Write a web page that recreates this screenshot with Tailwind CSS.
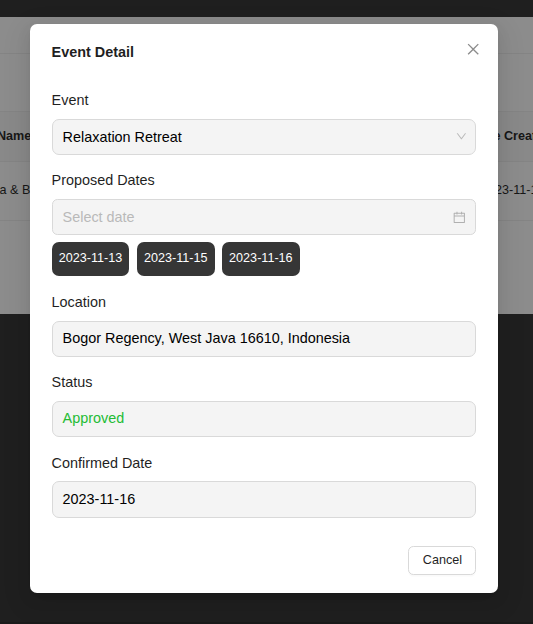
<!DOCTYPE html>
<html lang="en">
<head>
<meta charset="utf-8">
<title>Event Detail</title>
<script src="https://cdn.jsdelivr.net/npm/@tailwindcss/browser@4"></script>
</head>
<body class="relative h-[624px] w-[533px] overflow-hidden bg-[#1f1f1f] font-['Liberation_Sans',Arial,sans-serif] text-[12.6px] text-[#171717]">
  <!-- dimmed page -->
  <div class="flex h-full flex-col pt-[17px]">
    <div class="h-[297px] bg-[#8c8c8c]">
      <div class="h-[37px] border-b border-[#848484]"></div>
      <div class="h-[58px] border-b border-[#848484]"></div>
      <div class="flex h-[50px] items-center justify-between border-b border-[#848484] bg-[#898989] font-bold whitespace-nowrap">
        <span class="-ml-[3px]">Name</span><span class="w-[39.5px]">e Created</span>
      </div>
      <div class="flex h-[59px] items-center justify-between border-b border-[#848484] whitespace-nowrap">
        <span class="-ml-[0.4px] pb-[2px]">a &amp; B</span><span class="w-[38px] pb-[2px]">23-11-13</span>
      </div>
    </div>
    <div class="mt-auto h-[2px] bg-[#1a1a1a]"></div>
  </div>

  <!-- dialog -->
  <div class="absolute top-[24px] left-[30px] flex h-[569px] w-[468px] flex-col rounded-[7px] bg-white px-[21.6px] pt-[17px] text-[14.4px] text-[#1f1f1f] shadow-[0_5.4px_14.4px_0_rgba(0,0,0,0.08),0_2.7px_5.4px_-3.6px_rgba(0,0,0,0.12),0_8.1px_25.2px_7.2px_rgba(0,0,0,0.05)]">
    <div class="flex justify-between">
      <h1 class="h-[22px] leading-[22px] font-bold">Event Detail</h1>
      <svg class="mt-[1px] -mr-[4px] h-[14.4px] w-[14.4px]" viewBox="64 64 896 896" fill="#8c8c8c"><path d="M799.9 166.3l57.8 57.8L569.9 512l287.8 287.8-57.8 57.9L512 569.9 224.2 857.7l-57.9-57.8L454.1 512 166.3 224.2l57.8-57.9L512 454.1z"/></svg>
    </div>

    <div class="mt-[26px] h-[22px] leading-[22px]">Event</div>
    <div class="mt-[8px] flex h-[36px] items-center justify-between rounded-[7px] border border-[#d9d9d9] bg-[#f4f4f4] pr-[9px] pl-[10px] text-black">
      <span class="pt-[2px]">Relaxation Retreat</span>
      <svg class="-mt-px h-[10.8px] w-[10.8px]" viewBox="64 64 896 896" fill="#b9b9b9"><path d="M884 256h-75c-5.1 0-9.9 2.5-12.9 6.6L512 654.2 227.9 262.6c-3-4.1-7.8-6.6-12.9-6.6h-75c-6.5 0-10.3 7.4-6.5 12.7l352.6 486.1c12.8 17.6 39 17.6 51.7 0l352.6-486.1c3.9-5.3.1-12.7-6.4-12.7z"/></svg>
    </div>

    <div class="mt-[14px] h-[22px] leading-[22px]">Proposed Dates</div>
    <div class="mt-[8px] flex h-[36px] items-center justify-between rounded-[5.4px] border border-[#d9d9d9] bg-[#f4f4f4] pr-[10px] pl-[10px] text-[#b9b9b9]">
      <span class="pt-[2px]">Select date</span>
      <svg class="h-[12.6px] w-[12.6px]" viewBox="64 64 896 896" fill="#b0b0b0"><path d="M880 184H712v-64c0-4.4-3.6-8-8-8h-56c-4.4 0-8 3.6-8 8v64H384v-64c0-4.4-3.6-8-8-8h-56c-4.4 0-8 3.6-8 8v64H144c-17.7 0-32 14.3-32 32v664c0 17.7 14.3 32 32 32h736c17.7 0 32-14.3 32-32V216c0-17.7-14.3-32-32-32zm-40 656H184V460h656v380zM184 392V256h128v48c0 4.4 3.6 8 8 8h56c4.4 0 8-3.6 8-8v-48h256v48c0 4.4 3.6 8 8 8h56c4.4 0 8-3.6 8-8v-48h128v136H184z"/></svg>
    </div>
    <div class="mt-[7px] flex h-[34px] gap-[7.4px] text-[12.6px] leading-[32px] text-white">
      <span class="w-[77.8px] rounded-[7px] bg-[#363636] text-center">2023-11-13</span>
      <span class="w-[77.8px] rounded-[7px] bg-[#363636] text-center">2023-11-15</span>
      <span class="w-[77.8px] rounded-[7px] bg-[#363636] text-center">2023-11-16</span>
    </div>

    <div class="mt-[15px] h-[22px] leading-[22px]">Location</div>
    <div class="mt-[8px] h-[36px] rounded-[7px] border border-[#d9d9d9] bg-[#f4f4f4] pl-[10px] leading-[33px] text-black">Bogor Regency, West Java 16610, Indonesia</div>

    <div class="mt-[14px] h-[22px] leading-[22px]">Status</div>
    <div class="mt-[8px] h-[36px] rounded-[7px] border border-[#d9d9d9] bg-[#f4f4f4] pl-[10px] leading-[33px] text-[#23bc34]">Approved</div>

    <div class="mt-[15px] h-[22px] leading-[22px]">Confirmed Date</div>
    <div class="mt-[7px] h-[37px] rounded-[7px] border border-[#d9d9d9] bg-[#f4f4f4] pl-[10px] leading-[35px] text-black">2023-11-16</div>

    <button class="mt-[28px] h-[29px] w-[68px] self-end rounded-[5.4px] border border-[#d9d9d9] bg-white text-[12.6px] leading-[27px] shadow-[0_1.8px_0_rgba(0,0,0,0.02)]">Cancel</button>
  </div>
</body>
</html>
